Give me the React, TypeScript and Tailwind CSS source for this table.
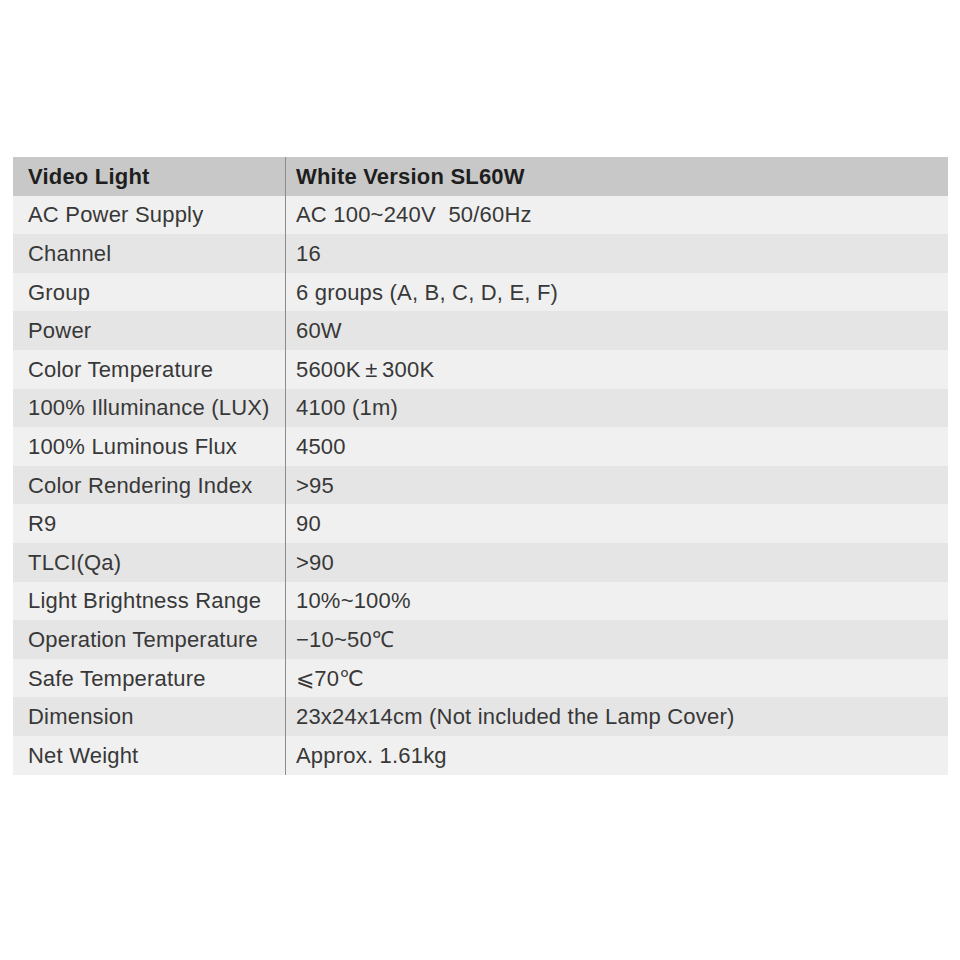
const rows: [string, string][] = [
  ["AC Power Supply", "AC 100~240V\u00a0\u00a050/60Hz"],
  ["Channel", "16"],
  ["Group", "6 groups (A, B, C, D, E, F)"],
  ["Power", "60W"],
  ["Color Temperature", "5600K\u2009\u00b1\u2009300K"],
  ["100% Illuminance (LUX)", "4100 (1m)"],
  ["100% Luminous Flux", "4500"],
  ["Color Rendering Index", ">95"],
  ["R9", "90"],
  ["TLCI(Qa)", ">90"],
  ["Light Brightness Range", "10%~100%"],
  ["Operation Temperature", "\u221210~50\u2103"],
  ["Safe Temperature", "\u2a7d70\u2103"],
  ["Dimension", "23x24x14cm (Not included the Lamp Cover)"],
  ["Net Weight", "Approx. 1.61kg"],
];

export default function App() {
  return (
    <div className="w-[960px] h-[960px] bg-white pt-[157px] pl-[13px] font-['Liberation_Sans',Arial,sans-serif] text-[22px] tracking-[0.2px]">
      <div className="w-[935px]">
        <div className="grid grid-cols-[272px_1fr] h-[38.6px] bg-[#c8c8c8] font-bold text-[#1e1e1e]">
          <div className="flex items-center pl-[15px]">Video Light</div>
          <div className="flex items-center pl-[10px] border-l border-[#8c8c8c]">White Version SL60W</div>
        </div>
        {rows.map(([label, value], i) => (
          <div
            key={label}
            className={`grid grid-cols-[272px_1fr] h-[38.6px] text-[#383838] ${i % 2 === 0 ? "bg-[#f0f0f0]" : "bg-[#e5e5e5]"}`}
          >
            <div className="flex items-center pl-[15px] whitespace-nowrap">{label}</div>
            <div className="flex items-center pl-[10px] border-l border-[#8c8c8c] whitespace-nowrap">{value}</div>
          </div>
        ))}
      </div>
    </div>
  );
}
